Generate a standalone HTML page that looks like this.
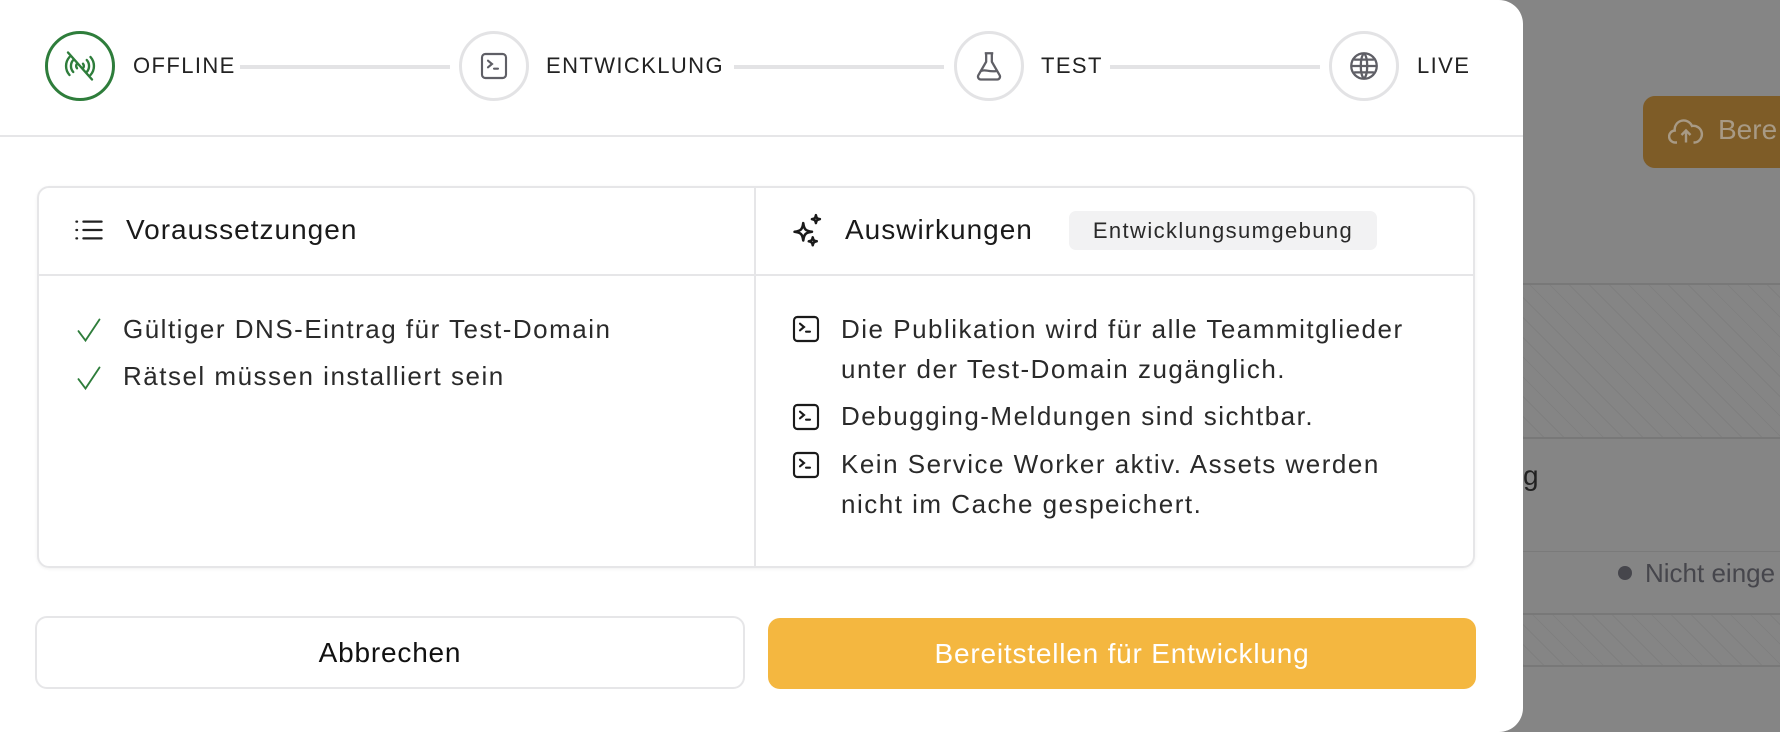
<!DOCTYPE html>
<html><head><meta charset="utf-8"><style>
*{box-sizing:border-box;margin:0;padding:0}
body{width:1780px;height:732px;overflow:hidden;background:#858585;font-family:"Liberation Sans",sans-serif;color:#1d1d1f;position:relative}
.a{position:absolute;white-space:nowrap}
.bg{background:repeating-linear-gradient(45deg,#7f7f7f 0 1px,transparent 1px 14px)}
.modal{left:0;top:0;width:1523px;height:732px;background:#fff;border-radius:0 24px 24px 0}
.circ{width:70px;height:70px;border-radius:50%;border:3px solid #e3e3e5;top:31px;display:flex;align-items:center;justify-content:center}
.st{top:53px;font-size:22px;color:#222;letter-spacing:1.4px}
.ln{top:65px;height:4px;background:#e3e3e5}
.t{font-size:26px;color:#2a2a2a;line-height:40px;letter-spacing:1.5px}
.h{font-size:28px;color:#1a1a1a;letter-spacing:1px}
</style></head><body>
<div class="a" style="left:1523px;top:0;width:257px;height:732px;background:#858585"></div>
<div class="a" style="left:1643px;top:96px;width:160px;height:72px;background:#7e5c27;border-radius:12px"></div>
<svg class="a" style="left:1668px;top:117px" width="36" height="30" viewBox="0 0 24 20" fill="none" stroke="#a89a85" stroke-width="1.6"><path d="M6 17H5a4 4 0 0 1-.5-8A6 6 0 0 1 16 6a4.5 4.5 0 0 1 2 11h-1"/><path d="M12 17V9M9 12l3-3 3 3"/></svg>
<div class="a" style="left:1718px;top:114px;font-size:28px;color:#a89a85">Bere</div>
<div class="a" style="left:1523px;top:283px;width:257px;height:2px;background:#787878"></div>
<div class="a bg" style="left:1523px;top:285px;width:257px;height:152px"></div>
<div class="a" style="left:1523px;top:437px;width:257px;height:2px;background:#787878"></div>
<div class="a" style="left:1523px;top:460px;font-size:28px;color:#222">g</div>
<div class="a" style="left:1523px;top:551px;width:257px;height:1px;background:#7a7a7a"></div>
<div class="a" style="left:1618px;top:566px;width:14px;height:14px;border-radius:50%;background:#46464c"></div>
<div class="a" style="left:1645px;top:558px;font-size:26px;color:#46464c">Nicht einge</div>
<div class="a" style="left:1523px;top:613px;width:257px;height:2px;background:#787878"></div>
<div class="a bg" style="left:1523px;top:615px;width:257px;height:50px"></div>
<div class="a" style="left:1523px;top:665px;width:257px;height:2px;background:#787878"></div>

<div class="a modal"></div>
<!-- stepper -->
<div class="a circ" style="left:45px;border-color:#2e7d3b;border-width:3.5px"><svg width="36" height="36" viewBox="0 0 24 24" fill="none" stroke="#2e7d3b" stroke-width="1.6" stroke-linecap="round"><path d="M4 3l16 18"/><path d="M7.5 8a6 6 0 0 0 0 8M5 6a9 9 0 0 0 0 12M16.5 8a6 6 0 0 1 0 8M19 6a9 9 0 0 1 0 12M10 10.5a2.5 2.5 0 0 0 0 3M14 10.5a2.5 2.5 0 0 1 0 3"/></svg></div>
<div class="a st" style="left:133px">OFFLINE</div>
<div class="a ln" style="left:240px;width:210px"></div>
<div class="a circ" style="left:459px"><svg width="32" height="32" viewBox="0 0 24 24" fill="none" stroke="#5f5f66" stroke-width="1.6" stroke-linecap="round"><rect x="3" y="3" width="18" height="18" rx="2.5"/><path d="M7.5 8l3 2.5-3 2.5M12 14h3"/></svg></div>
<div class="a st" style="left:546px">ENTWICKLUNG</div>
<div class="a ln" style="left:734px;width:210px"></div>
<div class="a circ" style="left:954px"><svg width="34" height="34" viewBox="0 0 24 24" fill="none" stroke="#5f5f66" stroke-width="1.6" stroke-linejoin="round"><path d="M9 3h6M10 3v6L4.5 18.5A2 2 0 0 0 6.2 21.5h11.6a2 2 0 0 0 1.7-3L14 9V3"/><path d="M6.5 15.5c3-1.5 5 1 11 0"/></svg></div>
<div class="a st" style="left:1041px">TEST</div>
<div class="a ln" style="left:1110px;width:210px"></div>
<div class="a circ" style="left:1329px"><svg width="34" height="34" viewBox="0 0 24 24" fill="none" stroke="#5f5f66" stroke-width="1.6"><circle cx="12" cy="12" r="9"/><path d="M3 12h18M12 3c-3 3-3 15 0 18M12 3c3 3 3 15 0 18M5 7.5h14M5 16.5h14"/></svg></div>
<div class="a st" style="left:1417px">LIVE</div>
<div class="a" style="left:0;top:135px;width:1523px;height:2px;background:#e6e6e8"></div>

<!-- card -->
<div class="a" style="left:37px;top:186px;width:1438px;height:382px;border:2px solid #e6e6e8;border-radius:12px;box-shadow:0 1px 3px rgba(0,0,0,.06)"></div>
<div class="a" style="left:754px;top:187px;width:2px;height:380px;background:#e6e6e8"></div>
<div class="a" style="left:38px;top:274px;width:1436px;height:2px;background:#e6e6e8"></div>
<svg class="a" style="left:72px;top:216px" width="34" height="28" viewBox="0 0 24 20" fill="none" stroke="#222" stroke-width="1.6" stroke-linecap="round"><path d="M8 4h13M8 10h13M8 16h13M3 4h.5M3 10h.5M3 16h.5"/></svg>
<div class="a h" style="left:126px;top:214px">Voraussetzungen</div>
<svg class="a" style="left:789px;top:211px" width="38" height="40" viewBox="0 0 24 24" fill="none" stroke="#1a1a1a" stroke-width="1.6" stroke-linejoin="round"><path d="M9 7c.5 4 1.5 5 5.5 5.5-4 .5-5 1.5-5.5 5.5-.5-4-1.5-5-5.5-5.5 4-.5 5-1.5 5.5-5.5z"/><path d="M17 2c.3 1.8.8 2.3 2.5 2.5-1.7.3-2.2.8-2.5 2.5-.3-1.7-.8-2.2-2.5-2.5 1.7-.2 2.2-.7 2.5-2.5zM15 16c.3 1.8.8 2.3 2.5 2.5-1.7.3-2.2.8-2.5 2.5-.3-1.7-.8-2.2-2.5-2.5 1.7-.2 2.2-.7 2.5-2.5z"/></svg>
<div class="a h" style="left:845px;top:214px">Auswirkungen</div>
<div class="a" style="left:1069px;top:211px;width:308px;height:39px;background:#f2f2f3;border-radius:7px;font-size:22px;letter-spacing:1.4px;line-height:39px;text-align:center;color:#2a2a2a">Entwicklungsumgebung</div>

<svg class="a" style="left:74px;top:316px" width="30" height="28" viewBox="0 0 24 24" fill="none" stroke="#2e7d3b" stroke-width="1.6" stroke-linecap="round"><path d="M3 13l6 8L21 3"/></svg>
<div class="a t" style="left:123px;top:309px">Gültiger DNS-Eintrag für Test-Domain</div>
<svg class="a" style="left:74px;top:364px" width="30" height="28" viewBox="0 0 24 24" fill="none" stroke="#2e7d3b" stroke-width="1.6" stroke-linecap="round"><path d="M3 13l6 8L21 3"/></svg>
<div class="a t" style="left:123px;top:356px">Rätsel müssen installiert sein</div>

<svg class="a" style="left:790px;top:313px" width="32" height="32" viewBox="0 0 24 24" fill="none" stroke="#1a1a1a" stroke-width="1.6" stroke-linecap="round"><rect x="3" y="3" width="18" height="18" rx="2.5"/><path d="M7.5 8l3 2.5-3 2.5M12 14h3"/></svg>
<div class="a t" style="left:841px;top:309px">Die Publikation wird für alle Teammitglieder<br>unter der Test-Domain zugänglich.</div>
<svg class="a" style="left:790px;top:401px" width="32" height="32" viewBox="0 0 24 24" fill="none" stroke="#1a1a1a" stroke-width="1.6" stroke-linecap="round"><rect x="3" y="3" width="18" height="18" rx="2.5"/><path d="M7.5 8l3 2.5-3 2.5M12 14h3"/></svg>
<div class="a t" style="left:841px;top:396px">Debugging-Meldungen sind sichtbar.</div>
<svg class="a" style="left:790px;top:449px" width="32" height="32" viewBox="0 0 24 24" fill="none" stroke="#1a1a1a" stroke-width="1.6" stroke-linecap="round"><rect x="3" y="3" width="18" height="18" rx="2.5"/><path d="M7.5 8l3 2.5-3 2.5M12 14h3"/></svg>
<div class="a t" style="left:841px;top:444px">Kein Service Worker aktiv. Assets werden<br>nicht im Cache gespeichert.</div>

<!-- buttons -->
<div class="a" style="left:35px;top:616px;width:710px;height:73px;border:2px solid #e6e6e8;border-radius:12px;text-align:center;line-height:69px;font-size:28px;letter-spacing:.8px;color:#111">Abbrechen</div>
<div class="a" style="left:768px;top:618px;width:708px;height:71px;background:#f4b740;border-radius:12px;text-align:center;line-height:71px;font-size:28px;letter-spacing:.8px;color:#fff">Bereitstellen für Entwicklung</div>
</body></html>
